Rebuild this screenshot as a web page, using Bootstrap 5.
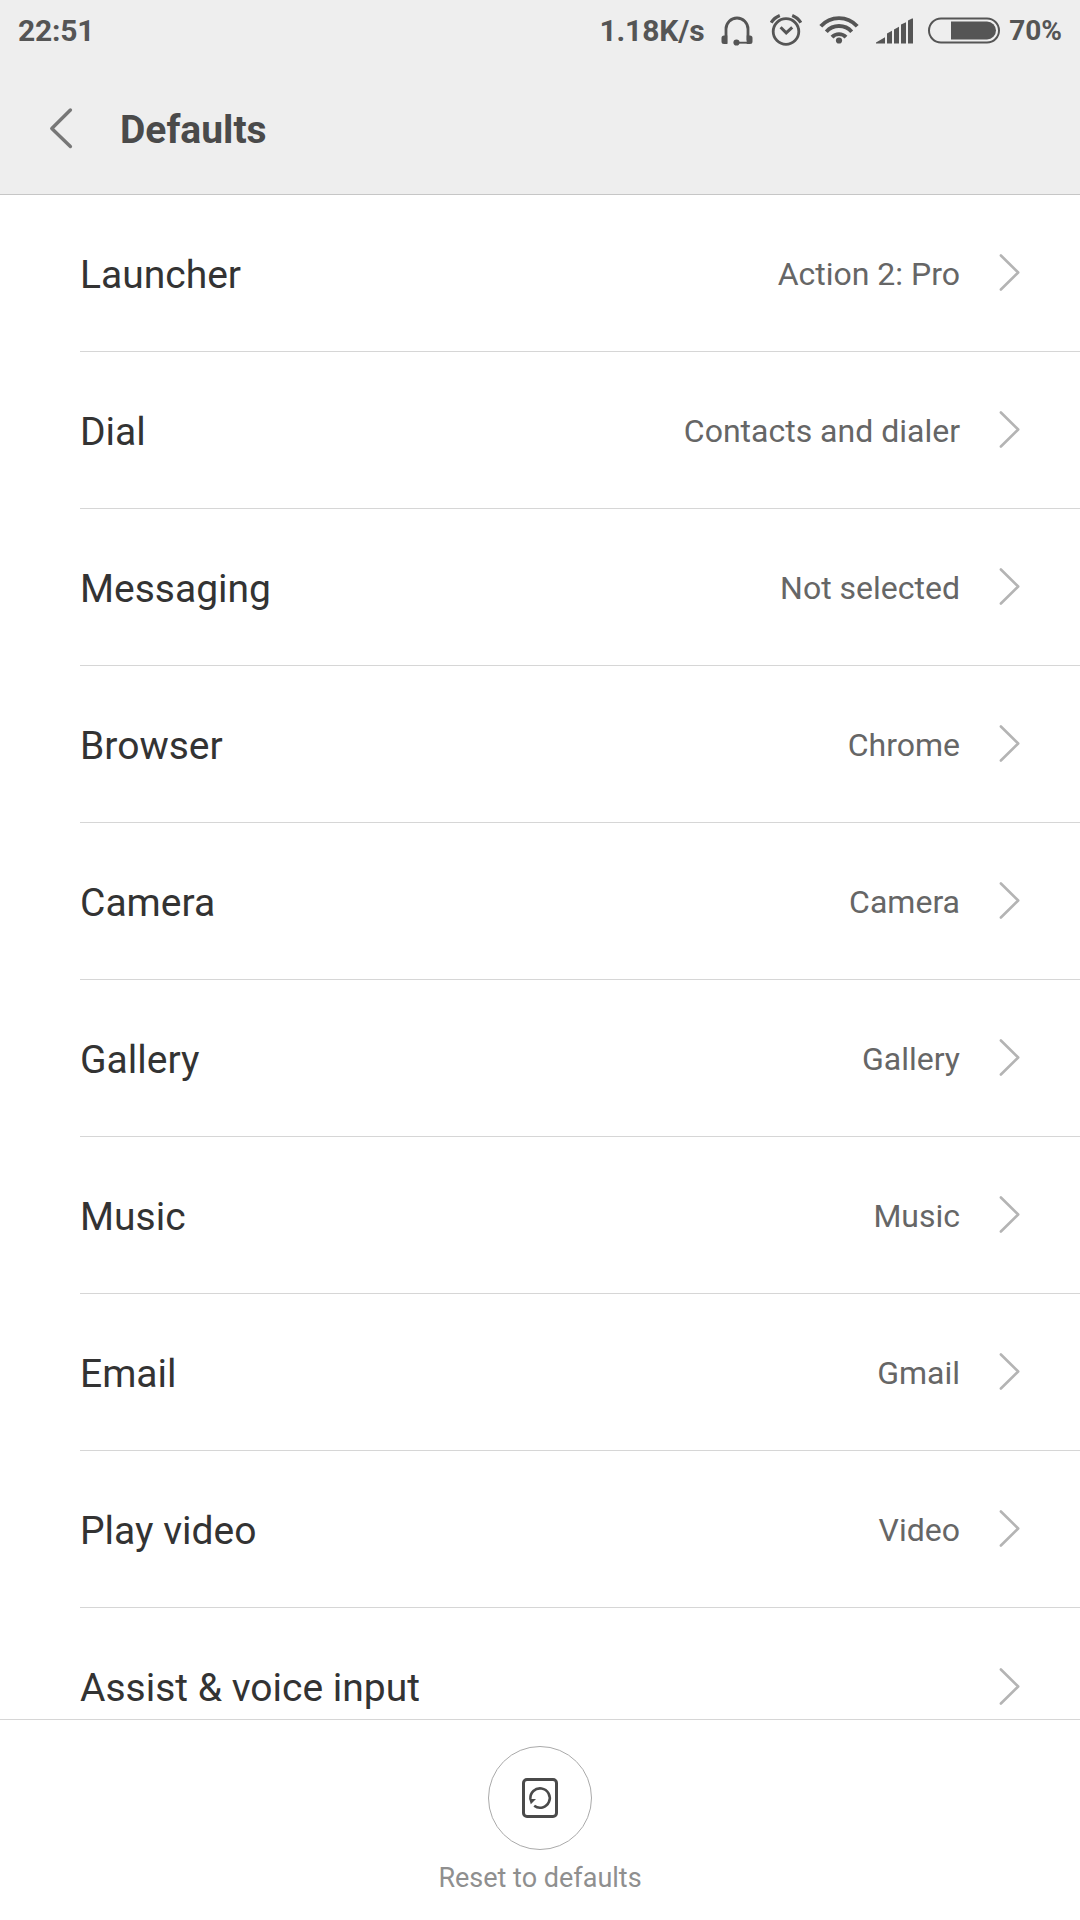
<!DOCTYPE html>
<html lang="en">
<head>
<meta charset="utf-8">
<meta name="viewport" content="width=device-width, initial-scale=1">
<title>Defaults</title>
<link rel="stylesheet" href="https://cdn.jsdelivr.net/npm/bootstrap@5.3.0/dist/css/bootstrap.min.css">
<style>
  body { font-family: Roboto, "Liberation Sans", sans-serif; line-height: 1.17; color: #333; background: #fff; }
  .screen { height: 1920px; }
  .top-area { background: #eee; border-bottom: 1px solid #c6c6c6; height: 195px; }
  .status-bar { height: 61px; padding-left: 18px; padding-right: 18px; color: #555; font-size: 30px; font-weight: 700; }
  .status-bar svg { color: #555; }
  .clock { letter-spacing: -.2px; }
  .net-speed { letter-spacing: -.1px; margin-right: 16px; }
  .ico-headset { margin-right: 17.500px; }
  .ico-alarm { margin-right: 17px; }
  .ico-wifi { margin-right: 17px; }
  .ico-signal { margin-right: 15px; }
  .ico-battery { margin-right: 9px; }
  .battery-level { font-size: 28px; padding-top: 2px; }
  .title-bar { height: 133px; padding-left: 48px; }
  .title-bar h1 { font-size: 39px; font-weight: 700; line-height: 46px; color: #4a4a4a; margin-left: 46px; padding-top: 4px; }
  .back-btn { color: #777; width: 26px; }
  .settings-list .list-group-item { height: 157px; margin-left: 80px; padding: 0 59px 0 0; border-color: #d6d6d6; border-bottom-width: 1px; color: #333; }
  .item-label { font-size: 39px; line-height: 46px; padding-top: 3px; }
  .item-value { font-size: 32px; line-height: 38px; padding-top: 2px; color: #666; margin-right: 39px; }
  .chev { color: #b4b4b4; }
  .action-bar { height: 201px; border-top: 1px solid #d6d6d6; padding-top: 26px; background: #fff; }
  .reset-btn { width: 104px; height: 104px; border: 1px solid #aaa; color: #4a4a4a; }
  .reset-text { font-size: 27px; line-height: 32px; color: #8f8f8f; margin-top: 12px; }
</style>
</head>
<body>
<div class="screen d-flex flex-column overflow-hidden">
  <header class="top-area flex-shrink-0">
    <div class="status-bar d-flex align-items-center">
      <span class="clock me-auto">22:51</span>
      <span class="net-speed">1.18K/s</span>
      <svg class="ico-headset" width="32" height="32" viewBox="720.500 14.500 32 32" fill="none" stroke="currentColor">
        <path d="M725.500 43V28.500a11 11 0 0 1 22 0V40" stroke-width="2.800"/>
        <path d="M726.800 35h-3.300a2.500 2.500 0 0 0-2.500 2.500v3.500a2.500 2.500 0 0 0 2.500 2.500h3.300zM746.200 35h3.300a2.500 2.500 0 0 1 2.500 2.500v3.500a2.500 2.500 0 0 1-2.500 2.500h-3.300z" fill="currentColor" stroke="none"/>
        <circle cx="736" cy="42" r="3.100" fill="currentColor" stroke="none"/>
        <path d="M737 42.200H748" stroke-width="1.900"/>
      </svg>
      <svg class="ico-alarm" width="32" height="34" viewBox="770 13.500 32 34" fill="none" stroke="currentColor" stroke-width="2.800">
        <circle cx="786" cy="31" r="12.800"/>
        <path d="M780.600 26.800l5.600 5.600 6-5.600" stroke-width="3"/>
        <path d="M771.200 22.200Q774 17.300 779.800 15M800.800 22.200Q798 17.300 792.200 15" stroke-width="3.200"/>
      </svg>
      <svg class="ico-wifi" width="40" height="32" viewBox="819 14.500 40 32" fill="none" stroke="currentColor" stroke-width="3.900">
        <path d="M820.800 25.800a24.300 24.300 0 0 1 36.400 0M826.300 31.200a17 17 0 0 1 25.400 0M832 36.600a9.700 9.700 0 0 1 14 0"/>
        <circle cx="839" cy="40" r="3.100" fill="currentColor" stroke="none"/>
      </svg>
      <svg class="ico-signal" width="37" height="32" viewBox="876 14.500 37 32" fill="currentColor">
        <path d="M876 43v-1l9-5.200V43zM887 43V33l5-2.800V43zM894 43V29l5-2.800V43zM901 43V24l5-2.300V43zM908 43V20l4-2h1v25z"/>
      </svg>
      <svg class="ico-battery" width="72" height="28" viewBox="928 16.500 72 28">
        <rect x="929" y="18" width="70" height="24" rx="12" fill="none" stroke="currentColor" stroke-width="2"/>
        <path d="M951 21h36a9 9 0 0 1 0 18h-36z" fill="currentColor"/>
      </svg>
      <span class="battery-level">70%</span>
    </div>
    <div class="title-bar d-flex align-items-center">
      <a href="#" class="back-btn d-flex" aria-label="Back">
        <svg width="26" height="42" viewBox="0 0 26 42" fill="none" stroke="currentColor" stroke-width="3.400" stroke-linecap="round" stroke-linejoin="round"><path d="M22.400 3L3.800 21.500l18.600 18"/></svg>
      </a>
      <h1 class="mb-0">Defaults</h1>
    </div>
  </header>

  <main class="flex-grow-1 overflow-hidden" style="min-height:0">
    <ul class="list-group list-group-flush settings-list" id="settings"></ul>
  </main>

  <footer class="action-bar flex-shrink-0 d-flex flex-column align-items-center">
    <button type="button" class="reset-btn rounded-circle bg-white p-0 d-flex align-items-center justify-content-center" aria-label="Reset to defaults">
      <svg width="36" height="40" viewBox="0 0 36 40" fill="none" stroke="currentColor">
        <rect x="1.500" y="1.500" width="33" height="37" rx="3.500" stroke-width="3"/>
        <path d="M8.400 21A9.700 9.700 0 1 1 12.200 27.800" stroke-width="2.600"/>
        <path d="M7.200 21h6.800L8.800 26.200z" fill="currentColor" stroke="none"/>
      </svg>
    </button>
    <div class="reset-text">Reset to defaults</div>
  </footer>
</div>
<script src="https://cdn.jsdelivr.net/npm/bootstrap@5.3.0/dist/js/bootstrap.bundle.min.js"></script>
<script>
  const items = [
    ['Launcher', 'Action 2: Pro'],
    ['Dial', 'Contacts and dialer'],
    ['Messaging', 'Not selected'],
    ['Browser', 'Chrome'],
    ['Camera', 'Camera'],
    ['Gallery', 'Gallery'],
    ['Music', 'Music'],
    ['Email', 'Gmail'],
    ['Play video', 'Video'],
    ['Assist &amp; voice input', '']
  ];
  document.getElementById('settings').innerHTML = items.map(([label, value]) => `
    <li class="list-group-item d-flex align-items-center flex-shrink-0">
      <span class="item-label me-auto">${label}</span>
      <span class="item-value">${value}</span>
      <svg class="chev" width="22" height="38" viewBox="0 0 22 38" fill="none" stroke="currentColor" stroke-width="2.600" stroke-linecap="round" stroke-linejoin="round"><path d="M1.900 1.500L19.200 18.500L1.900 35.500"/></svg>
    </li>`).join('');
</script>
</body>
</html>
